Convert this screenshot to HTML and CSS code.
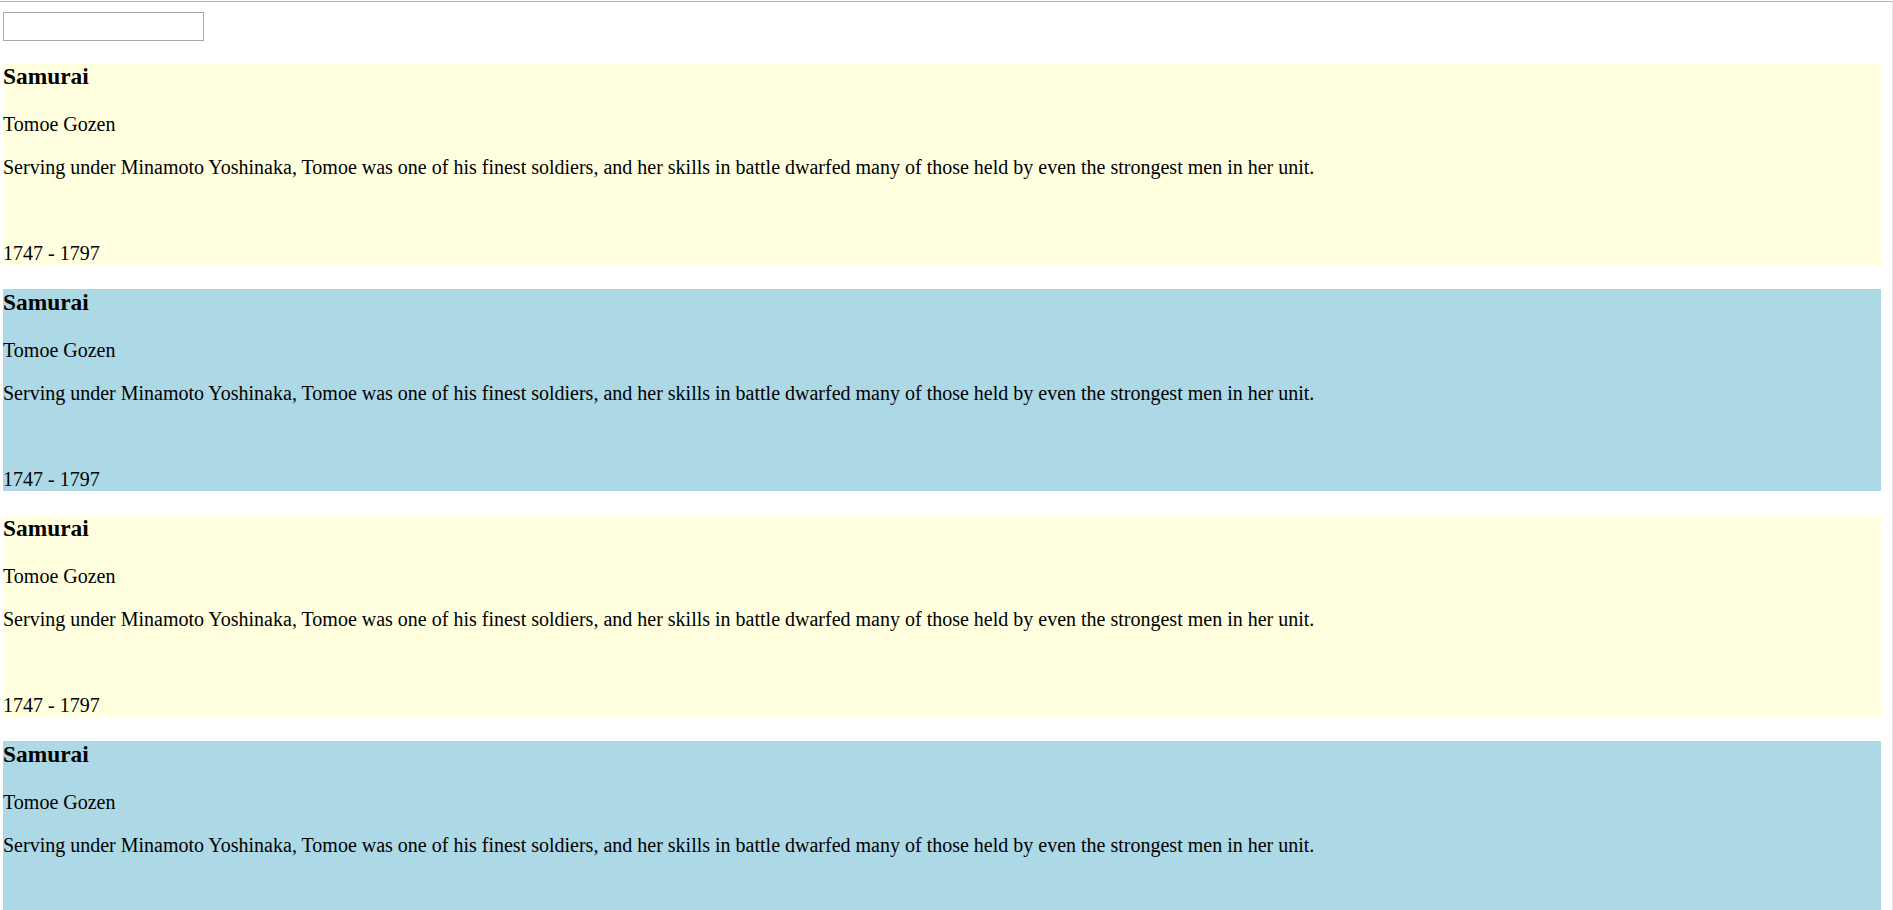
FILE: index.html
```html
<!DOCTYPE html>
<html>
<head>
<meta charset="utf-8">
<title>Samurai</title>
<link rel="stylesheet" href="styles.css">
</head>
<body>
<div class="frame">
  <input class="search" type="text">
  <div class="list">
    <div class="card yellow">
      <h3 class="title">Samurai</h3>
      <p class="name">Tomoe Gozen</p>
      <p class="desc">Serving under Minamoto Yoshinaka, Tomoe was one of his finest soldiers, and her skills in battle dwarfed many of those held by even the strongest men in her unit.</p>
      <p class="dates">1747 - 1797</p>
    </div>
    <div class="card blue">
      <h3 class="title">Samurai</h3>
      <p class="name">Tomoe Gozen</p>
      <p class="desc">Serving under Minamoto Yoshinaka, Tomoe was one of his finest soldiers, and her skills in battle dwarfed many of those held by even the strongest men in her unit.</p>
      <p class="dates">1747 - 1797</p>
    </div>
    <div class="card yellow">
      <h3 class="title">Samurai</h3>
      <p class="name">Tomoe Gozen</p>
      <p class="desc">Serving under Minamoto Yoshinaka, Tomoe was one of his finest soldiers, and her skills in battle dwarfed many of those held by even the strongest men in her unit.</p>
      <p class="dates">1747 - 1797</p>
    </div>
    <div class="card blue">
      <h3 class="title">Samurai</h3>
      <p class="name">Tomoe Gozen</p>
      <p class="desc">Serving under Minamoto Yoshinaka, Tomoe was one of his finest soldiers, and her skills in battle dwarfed many of those held by even the strongest men in her unit.</p>
      <p class="dates">1747 - 1797</p>
    </div>
  </div>
</div>
</body>
</html>
```
FILE: styles.css
```css
html, body {
  margin: 0;
  padding: 0;
  background: #ffffff;
  overflow: hidden;
}

body {
  font-family: "Liberation Serif", "Times New Roman", serif;
  font-size: 20px;
  color: #000000;
}

.frame {
  margin-top: 1px;
  width: 1893px;
  height: 909px;
  border-top: 1px solid #b6b6b6;
  border-right: 1px solid #e4e4e4;
  padding: 10px 0 0 3px;
  box-sizing: border-box;
  overflow: hidden;
}

.search {
  display: block;
  width: 201px;
  height: 29px;
  box-sizing: border-box;
  border: 1px solid #a9a9a9;
  margin: 0;
  padding: 0;
  background: #ffffff;
}

.list {
  display: flex;
  flex-direction: column;
  gap: 24px;
  margin-top: 22px;
  width: 1878px;
}

.card {
  display: flow-root;
}

.yellow {
  background: #ffffe0;
}

.blue {
  background: #add8e6;
}

.title {
  margin: 0 0 23px 0;
  font-size: 23.4px;
  line-height: 27px;
  font-weight: bold;
}

.name,
.desc {
  margin: 0 0 20px 0;
  line-height: 23px;
}

.dates {
  margin: 63px 0 0 0;
  line-height: 23px;
}
```
